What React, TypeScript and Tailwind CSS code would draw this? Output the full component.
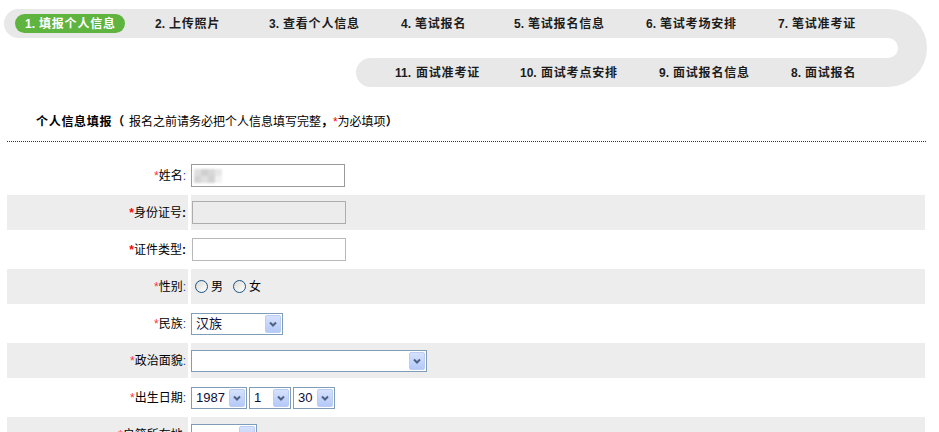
import React from "react";

const navBand = "bg-[#e8e8e8]";

function NavItem({ n, text, w, two }: { n: string; text: string; w?: string; two?: boolean }) {
  return (
    <div className={`flex shrink-0 items-center whitespace-nowrap text-[12px] font-bold text-[#1c1c1c] ${w ?? ""}`}>
      <span className={`inline-block font-['Liberation_Sans',sans-serif] ${two ? "w-[21px]" : "w-[14px]"}`}>{n}.</span>
      <span className="tracking-[0.8px]">{text}</span>
    </div>
  );
}

function Arrow() {
  return (
    <div className="mr-[1px] flex h-[18px] w-[16px] shrink-0 items-center justify-center rounded-[2px] border border-[#bccdf5] bg-linear-to-b from-[#d6e2fd] to-[#b3c9f7]">
      <svg width="8" height="6" viewBox="0 0 8 6">
        <path d="M1 1.5 L4 4.5 L7 1.5" stroke="#4d6185" strokeWidth="2" fill="none" />
      </svg>
    </div>
  );
}

function Sel({ w, value, cls }: { w: string; value?: string; cls?: string }) {
  return (
    <div className={`flex h-[22px] shrink-0 items-center justify-between border border-[#7f9db9] bg-white ${w} ${cls ?? ""}`}>
      <span className="pl-[4px] text-[13px] leading-none text-[#0c0c3c] font-['Liberation_Sans','Noto_Sans_CJK_SC',sans-serif]">
        {value ?? ""}
      </span>
      <Arrow />
    </div>
  );
}

function Label({ text, strong }: { text: string; strong?: boolean }) {
  return (
    <span className="whitespace-nowrap text-[12px] text-black">
      <span className={strong ? "font-bold text-[#ff0000]" : "text-[#ff3333]"}>*</span>
      {text}
      <span className={strong ? "font-bold text-black" : "text-[#333399]"}>:</span>
    </span>
  );
}

function Row({
  gray,
  label,
  strong,
  children,
}: {
  gray?: boolean;
  label: string;
  strong?: boolean;
  children?: React.ReactNode;
}) {
  const bg = gray ? "bg-[#ededed]" : "bg-white";
  return (
    <div className="flex h-[35px] gap-[3px]">
      <div className={`flex w-[181px] shrink-0 items-center justify-end pr-[2px] ${bg}`}>
        <Label text={label} strong={strong} />
      </div>
      <div className={`flex flex-1 items-center ${bg}`}>{children}</div>
    </div>
  );
}

function Radio() {
  return (
    <span className="inline-block h-[13px] w-[13px] shrink-0 rounded-full border border-[#1c5180] bg-linear-to-br from-[#dcdcd7] to-white" />
  );
}

export default function App() {
  return (
    <div className="h-[432px] w-[939px] overflow-hidden bg-white font-['Liberation_Sans','Noto_Sans_CJK_SC',sans-serif] text-black">
      {/* step navigation */}
      <div className="flex pl-[4px] pt-[9px]">
        <div className="flex w-[884px] flex-col">
          <div className={`flex h-[29px] items-center rounded-l-full pl-[11px] ${navBand}`}>
            <div className="flex h-[19px] w-[110px] shrink-0 items-center rounded-full bg-[#5fb43f] pl-[10px] text-[12px] font-bold text-white">
              <span className="inline-block w-[14px] font-['Liberation_Sans',sans-serif]">1.</span>
              <span className="tracking-[0.8px]">填报个人信息</span>
            </div>
            <div className="w-[30px] shrink-0" />
            <NavItem n="2" text="上传照片" w="w-[114px]" />
            <NavItem n="3" text="查看个人信息" w="w-[132px]" />
            <NavItem n="4" text="笔试报名" w="w-[113px]" />
            <NavItem n="5" text="笔试报名信息" w="w-[132px]" />
            <NavItem n="6" text="笔试考场安排" w="w-[132px]" />
            <NavItem n="7" text="笔试准考证" />
          </div>
          <div className="h-[20px]" />
          <div className={`ml-[352px] flex h-[29px] items-center rounded-l-full pl-[39px] ${navBand}`}>
            <NavItem n="11" two text="面试准考证" w="w-[125px]" />
            <NavItem n="10" two text="面试考点安排" w="w-[139px]" />
            <NavItem n="9" text="面试报名信息" w="w-[132px]" />
            <NavItem n="8" text="面试报名" />
          </div>
        </div>
        <div className={`flex h-[78px] w-[39px] items-center rounded-r-full ${navBand}`}>
          <div className="h-[20px] w-[10px] rounded-r-full bg-white" />
        </div>
      </div>

      {/* heading */}
      <div className="mt-[26px] flex h-[18px] items-center whitespace-nowrap pl-[36px] text-[12px] leading-[18px]">
        <span className="font-bold tracking-[0.7px]">个人信息填报（</span>
        <span className="ml-[4px]">报名之前请务必把个人信息填写完整</span>
        <span className="font-bold">，</span>
        <span className="text-[#ff0000]">*</span>
        <span>为必填项</span>
        <span className="font-bold">）</span>
      </div>

      <div className="ml-[7px] mt-[10px] w-[919px] border-t border-dotted border-[#333]" />

      {/* form */}
      <div className="ml-[7px] mt-[16px] flex w-[918px] flex-col gap-[2px]">
        <Row label="姓名">
          <div className="flex h-[23px] w-[154px] items-center border border-[#9a9a9a] bg-white pl-[2px]">
            <div className="flex h-[14px] w-[28px] flex-wrap opacity-80 blur-[1px]">
              <div className="h-[7px] w-[7px] bg-[#d8d8d8]" />
              <div className="h-[7px] w-[7px] bg-[#c4c4c4]" />
              <div className="h-[7px] w-[7px] bg-[#cfcfcf]" />
              <div className="h-[7px] w-[7px] bg-[#e2e2e2]" />
              <div className="h-[7px] w-[7px] bg-[#cacaca]" />
              <div className="h-[7px] w-[7px] bg-[#d9d9d9]" />
              <div className="h-[7px] w-[7px] bg-[#c8c8c8]" />
              <div className="h-[7px] w-[7px] bg-[#f0f0f0]" />
            </div>
          </div>
        </Row>
        <Row gray strong label="身份证号">
          <div className="ml-[1px] h-[23px] w-[154px] border border-[#adadad] bg-[#ececec]" />
        </Row>
        <Row strong label="证件类型">
          <div className="ml-[1px] h-[23px] w-[154px] border border-[#b8b8b8] bg-white" />
        </Row>
        <Row gray label="性别">
          <div className="flex items-center pl-[4px] text-[12px]">
            <Radio />
            <span className="ml-[3px]">男</span>
            <span className="ml-[10px] flex items-center">
              <Radio />
            </span>
            <span className="ml-[3px]">女</span>
          </div>
        </Row>
        <Row label="民族">
          <Sel w="w-[92px]" value="汉族" />
        </Row>
        <Row gray label="政治面貌">
          <Sel w="w-[236px]" />
        </Row>
        <Row label="出生日期">
          <Sel w="w-[56px]" value="1987" />
          <Sel w="w-[42px]" value="1" cls="ml-[2px]" />
          <Sel w="w-[42px]" value="30" cls="ml-[2px]" />
        </Row>
        <Row gray label="户籍所在地">
          <Sel w="w-[66px]" />
        </Row>
      </div>
    </div>
  );
}
